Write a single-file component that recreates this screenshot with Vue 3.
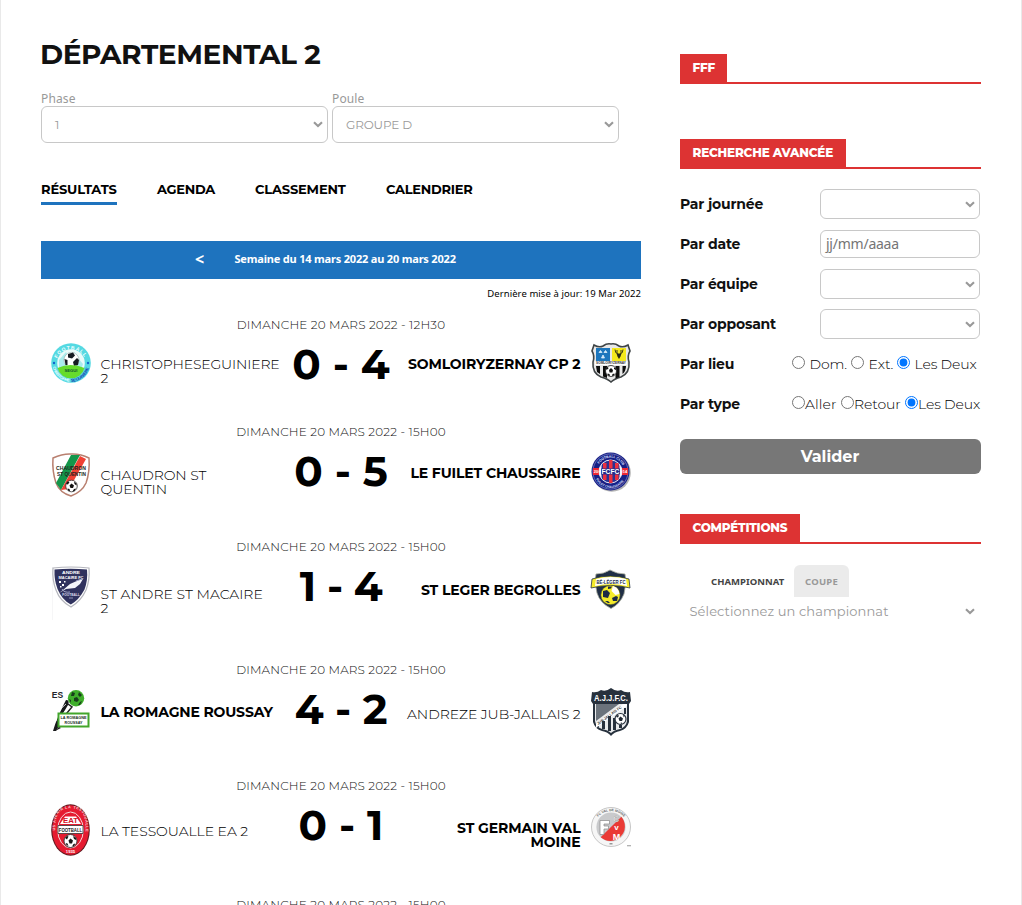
<script setup>
const tabs = [
  { label: 'RÉSULTATS', ls: -0.15, width: 76, active: true },
  { label: 'AGENDA', ls: -0.3, width: 58 },
  { label: 'CLASSEMENT', ls: -0.16, width: 91 },
  { label: 'CALENDRIER', ls: -0.25, width: 87 }
]

const matches = [
  {
    date: 'DIMANCHE 20 MARS 2022 - 12H30', height: 107, score: '0 - 4', sls: 0,
    home: { lines: ['CHRISTOPHESEGUINIERE', '2'], ls: -0.16, nameY: 32, logo: 'christophe', logoY: 11, logoH: 40 },
    away: { lines: ['SOMLOIRYZERNAY CP 2'], ls: -0.12, nameY: 32, win: true, logo: 'somloir', logoY: 11, logoH: 40 }
  },
  {
    date: 'DIMANCHE 20 MARS 2022 - 15H00', height: 115, score: '0 - 5', sls: 0,
    home: { lines: ['CHAUDRON ST', 'QUENTIN'], ls: -0.08, nameY: 36, logo: 'chaudron', logoY: 14, logoH: 44 },
    away: { lines: ['LE FUILET CHAUSSAIRE'], ls: -0.13, nameY: 34, win: true, logo: 'fuilet', logoY: 13, logoH: 40 }
  },
  {
    date: 'DIMANCHE 20 MARS 2022 - 15H00', height: 123, score: '1 - 4', sls: -0.6,
    home: { lines: ['ST ANDRE ST MACAIRE', '2'], ls: 0.03, nameY: 40, logo: 'andre', logoY: 12, logoH: 54 },
    away: { lines: ['ST LEGER BEGROLLES'], ls: -0.13, nameY: 36, win: true, logo: 'leger', logoY: 16, logoH: 39 }
  },
  {
    date: 'DIMANCHE 20 MARS 2022 - 15H00', height: 116, score: '4 - 2', sls: -0.2,
    home: { lines: ['LA ROMAGNE ROUSSAY'], ls: -0.16, nameY: 35, win: true, logo: 'romagne', logoY: 13, logoH: 41 },
    away: { lines: ['ANDREZE JUB-JALLAIS 2'], ls: -0.06, nameY: 37, logo: 'andreze', logoY: 11, logoH: 49 }
  },
  {
    date: 'DIMANCHE 20 MARS 2022 - 15H00', height: 119, score: '0 - 1', sls: 0,
    home: { lines: ['LA TESSOUALLE EA 2'], ls: -0.05, nameY: 38, logo: 'tessoualle', logoY: 11, logoH: 52 },
    away: { lines: ['ST GERMAIN VAL', 'MOINE'], ls: -0.1, nameY: 35, win: true, logo: 'germain', logoY: 14, logoH: 40 }
  },
  { date: 'DIMANCHE 20 MARS 2022 - 15H00', height: 100 }
]

const sides = ['home', 'away']

const fields = [
  { label: 'Par journée', kind: 'select' },
  { label: 'Par date', kind: 'date' },
  { label: 'Par équipe', kind: 'select' },
  { label: 'Par opposant', kind: 'select' },
  {
    label: 'Par lieu', kind: 'radio', name: 'lieu',
    options: [
      { text: 'Dom.', width: 59, ls: -0.1 },
      { text: 'Ext.', width: 46, ls: 0 },
      { text: 'Les Deux', width: 83, ls: -0.15, on: true }
    ]
  },
  {
    label: 'Par type', kind: 'radio', name: 'type', tight: true,
    options: [
      { text: 'Aller', width: 49, ls: 0.1 },
      { text: 'Retour', width: 64, ls: -0.1 },
      { text: 'Les Deux', width: 76, ls: -0.15, on: true }
    ]
  }
]
</script>

<template>
  <div class="page">
    <aside class="share"><span class="fb"></span><span class="tw"></span></aside>

    <main class="main">
      <h1>DÉPARTEMENTAL 2</h1>
      <div class="filters">
        <div class="filter">
          <label>Phase</label>
          <div class="select big">1
            <svg class="chev" viewBox="0 0 10 7"><path d="M1 1.2 5 5 9 1.2" /></svg>
          </div>
        </div>
        <div class="filter">
          <label>Poule</label>
          <div class="select big">GROUPE D
            <svg class="chev" viewBox="0 0 10 7"><path d="M1 1.2 5 5 9 1.2" /></svg>
          </div>
        </div>
      </div>

      <nav class="tabs">
        <a v-for="t in tabs" :key="t.label" :class="{ active: t.active }" :style="{ letterSpacing: t.ls + 'px', width: t.width + 'px' }">{{ t.label }}</a>
      </nav>

      <div class="week"><span class="prev">&lt;</span><span>Semaine du 14 mars 2022 au 20 mars 2022</span></div>
      <p class="updated">Dernière mise à jour: 19 Mar 2022</p>

      <section v-for="(m, i) in matches" :key="i" class="match" :style="{ height: m.height + 'px' }">
        <p class="date">{{ m.date }}</p>
        <div v-if="m.score" class="row">
          <div class="score" :style="{ letterSpacing: m.sls + 'px' }">{{ m.score }}</div>
          <div
            v-for="s in sides" :key="s" class="team" :class="[s, { win: m[s].win }]">
            <div class="name" :style="{ paddingTop: m[s].nameY - 7 + 'px', letterSpacing: m[s].ls + 'px' }">
              <span v-for="l in m[s].lines" :key="l">{{ l }}</span>
            </div>
            <svg class="logo" :style="{ marginTop: m[s].logoY + 'px', height: m[s].logoH + 'px' }" :viewBox="`0 0 40 ${m[s].logoH}`">
              <g v-if="m[s].logo === 'christophe'">
                <circle cx="20" cy="20" r="19.8" fill="#55d9e2" />
                <circle cx="20" cy="20" r="13.800" fill="#e9fbfa" />
                <path d="M8 17 15 9l4 8 4-8 4 6 5 6-2 6H8z" fill="#7fe3e4" opacity=".6" />
                <circle cx="20.5" cy="17" r="7.6" fill="#fff" stroke="#9aa" stroke-width=".6" />
                <path d="M17 11l5-1.500 2 3-3 3-4-1zM13.500 16l3 1v5l-2 0zM22 19l4-4 2 2-1 5-4 1z" fill="#151b22" />
                <path d="M6.500 25q13-6 27 0a14 14 0 0 1-27 0z" fill="#66dc2c" />
                <text x="20" y="28.500" class="tiny" font-size="4.200" fill="#0c5130">SEGUI</text>
                <path id="cTop" d="M5.500 17a15.200 15.200 0 0 1 29 0" fill="none" />
                <text class="tinyStart" font-size="5" letter-spacing=".9" fill="#f4ffff"><textPath href="#cTop" startOffset="4%">FOOTBALL</textPath></text>
                <path id="cBot" d="M1.800 24a18.600 18.600 0 0 0 36.400 0" fill="none" />
                <text class="tinyStart" font-size="4" letter-spacing="-.3" fill="#eaffff"><textPath href="#cBot">CHRISTOPHE</textPath></text>
                <text class="tinyStart" font-size="4.200" letter-spacing="-.2" fill="#123bb0"><textPath href="#cBot" startOffset="50%">SEGUINIERE</textPath></text>
                <circle cx="3" cy="20" r="1.200" fill="#1266cc" /><circle cx="37" cy="20" r="1.200" fill="#1266cc" />
              </g>
              <g v-else-if="m[s].logo === 'somloir'">
                <path d="M3 2q5 3 9 1 4-3 8-2 4-1 8 2 4 2 9-1l2 6q-3 5-1 11 1 11-8 15-7 2-10 5-3-3-10-5-9-4-8-15 2-6-1-11z" fill="#e8e8e8" stroke="#3f4446" stroke-width="1.600" />
                <path d="M5 5h14v13H5z" fill="#1c76bd" />
                <path d="M21 5h14v13H21z" fill="#f5e91c" />
                <path d="M8 9.500l1.500-2L11 9.500zM13 9.500l1.500-2L16 9.500zM10.500 15l1.500-3 1.500 3z" fill="#d9ecfa" stroke="#d9ecfa" stroke-width=".8" />
                <path d="M24 6.500q0 4 3 4.500M32 6.500q0 4-3 4.500M26 7v3M30 7v3" fill="none" stroke="#292916" stroke-width=".9" />
                <path d="M25.500 10.500h5l-1 3-1.500 2.500-1.500-2.500z" fill="#292916" />
                <path d="M4 18h32v4H4z" fill="#fff" />
                <text x="20" y="21.300" class="tiny" font-size="3.500" fill="#333" textLength="30" lengthAdjust="spacingAndGlyphs">SOMLOIRYZERNAY</text>
                <path d="M5 23h4v8l-3-2zM12 23h4v12l-4-1.500zM24.500 23h4v11l-4 1.500zM31.500 23H35q0 5-3.500 8z" fill="#0d0d0d" />
                <circle cx="20" cy="28" r="5.500" fill="#fff" stroke="#222" stroke-width=".8" />
                <path d="M18 27l2-2 2 2-.6 2.500h-2.800zM15 25l2-1 .5 1.500-2 1.500zM23 24.500l2 1v1.500l-2-1zM16.500 30.500l2 .5.500 2-2-.5zM21.500 31l2-.5-.5 2-2 .5z" fill="#111" />
              </g>
              <g v-else-if="m[s].logo === 'chaudron'">
                <path d="M2 5Q12 .5 20 1q9-.5 18 4 1 14-3 25-4 9-15 13Q9 40 5 30 1 18 2 5z" fill="#fff" stroke="#b98070" stroke-width="1.500" />
                <path d="M20 2h9L10 37l-5-7z" fill="#14964a" />
                <path d="M29 3l6 3L18 36l-8 1z" fill="#f04134" />
                <text x="20" y="16.500" class="tiny" font-size="5.400" fill="#241f20" textLength="30" lengthAdjust="spacingAndGlyphs">CHAUDRON</text>
                <text x="20.500" y="22.800" class="tiny" font-size="5.400" fill="#241f20" textLength="29" lengthAdjust="spacingAndGlyphs">ST QUENTIN</text>
                <circle cx="20.500" cy="33" r="5.800" fill="#fff" stroke="#333" stroke-width=".8" />
                <path d="M18.500 32.500l2-2 2.500 2-1 2.500h-2.500zM15 31l1.500-2.500 2 .5-1.500 2.500zM23 28.500l2.500 2v2l-2-1.500zM16.500 35.500l2 .5.500 2h-1.500zM23 36l2-.5-1.500 2.500-2 .5z" fill="#111" />
              </g>
              <g v-else-if="m[s].logo === 'fuilet'">
                <circle cx="20.800" cy="20.800" r="19" fill="#777" opacity=".55" />
                <circle cx="19.500" cy="19.500" r="19" fill="#171f86" />
                <circle cx="19.500" cy="19.500" r="17.600" fill="none" stroke="#aeb4e1" stroke-width=".5" />
                <path d="M2 16h35v7H2z" fill="#ed2734" />
                <circle cx="19.500" cy="19.500" r="11.500" fill="#2a3193" stroke="#fff" stroke-width=".9" />
                <path d="M12 11h3.500v17H12zM18 8h3.500v23H18zM24 11h3.500v17H24z" fill="#eb3040" />
                <path d="M10.500 12.500q-5 7 0 14zM28.500 12.500q5 7 0 14z" fill="#f6f6ff" />
                <path d="M10 16.500h19v6H10z" fill="#242b8c" />
                <text x="19.500" y="22" class="tiny" font-size="6.500" fill="#fff" textLength="18" lengthAdjust="spacingAndGlyphs">FCFC</text>
                <text x="5" y="21.300" class="tiny" font-size="4" fill="#fff">20</text>
                <text x="34" y="21.300" class="tiny" font-size="4" fill="#fff">14</text>
                <path id="fTop" d="M6.500 15a13.700 13.700 0 0 1 26 0" fill="none" />
                <text class="tinyStart" font-size="3.400" fill="#dfe2ff"><textPath href="#fTop" startOffset="10%">FOOTBALL CLUB</textPath></text>
                <path id="fBot" d="M4.500 26a16.300 16.300 0 0 0 30 0" fill="none" />
                <text class="tinyStart" font-size="3.200" fill="#dfe2ff"><textPath href="#fBot" startOffset="3%">FUILET CHAUSSAIRE</textPath></text>
              </g>
              <g v-else-if="m[s].logo === 'andre'">
                <path d="M1 1h1v53H1z" fill="#f6f6f7" />
                <path d="M2 2q18-2 36 0 1 12-3 22Q30 35 20 41 9 35 5 24 1 14 2 2z" fill="#fff" stroke="#b5b6bd" stroke-width="1.200" />
                <path d="M3.500 3.500q16-1.500 32.500 0 1 11-2.500 20Q28 34 19.800 38.500 11 34 6.500 23 3 14 3.500 3.500z" fill="#30325e" />
                <text x="20" y="8" class="tiny" font-size="4" fill="#fff" textLength="18" lengthAdjust="spacingAndGlyphs">ANDRE</text>
                <text x="20" y="12.600" class="tiny" font-size="4" fill="#fff" textLength="25" lengthAdjust="spacingAndGlyphs">MACAIRE FC</text>
                <path d="M12 24l7-6 9-4 4-1-3 5-5 4-9 1-7 4z" fill="#f3f4fa" />
                <path d="M11 23q2 4 8 3M25 15l6-2" stroke="#9da1c5" fill="none" />
                <path d="M8 15h2v2H8zM11 18h2v2h-2zM9 20h1.500v1.500H9zM13 15h1.500v1.500H13z" fill="#fff" />
                <text x="20" y="29.500" class="tiny" font-size="3.200" fill="#dcdded">FOOTBALL</text>
                <path d="M18 32h4" stroke="#8f92b5" />
              </g>
              <g v-else-if="m[s].logo === 'leger'">
                <path d="M5 4q8 0 14-4 7 4 15 4l1 8-2 12q-4 10-13 14.500Q9 33 6 23L4 12z" fill="#202f46" stroke="#a6a99b" stroke-width=".8" />
                <path d="M1 9q18-6 37 0l1 9q-19-5-39 0z" fill="#f5ec2a" stroke="#26344a" stroke-width=".8" />
                <path d="M5 9q15-4 30 0l1 7q-16-4-32 0z" fill="#fff" />
                <text x="20" y="13.600" class="tiny" font-size="5.800" fill="#1c2e4c" textLength="29" lengthAdjust="spacingAndGlyphs">BÉ-LÉGER FC</text>
                <circle cx="19.500" cy="25" r="9.600" fill="#f5ec2a" stroke="#6a6d2a" stroke-width=".5" />
                <path d="M22 16q6 2 6.500 8l-4 1-4-4z" fill="#fff" />
                <path d="M12 21l4-1 3 3-2 5-5-1zM21 28l4-2 2 1-1 4-4 0zM17 16.500l4 0-1 2-3 .5zM14 31l3 0 2 2-2 0z" fill="#1d2b45" />
              </g>
              <g v-else-if="m[s].logo === 'romagne'">
                <text x="6.500" y="7.500" class="tiny" font-size="8.500" fill="#24262b">ES</text>
                <path d="M15 10q4 0 2 5l-6 10-1 8-5 8H2q4-14 13-31z" fill="#17191b" />
                <path d="M17 14l4 3-10 12" stroke="#222" stroke-width="1.500" fill="none" />
                <path d="M5 31q2-11 10-17M9 31q3-9 8-13" stroke="#fff" fill="none" stroke-width=".8" />
                <circle cx="25" cy="8.200" r="8.200" fill="#3fae2b" />
                <path d="M21 2l3 1-1 3-3 0zM28 2l3 3-2 2-2-2zM23 8l3-1 2 3-2 2-3-1zM18 9l2 1v3zM29 12l2-1-2 4-2 0z" fill="#173d1b" />
                <path d="M7.500 23.500h30v13h-30z" fill="#fff" stroke="#43a62c" stroke-width="2" />
                <text x="22.500" y="29.300" class="tiny" font-size="3.800" fill="#16311a" textLength="26" lengthAdjust="spacingAndGlyphs">LA ROMAGNE</text>
                <text x="22.500" y="34" class="tiny" font-size="3.800" fill="#16311a" textLength="18" lengthAdjust="spacingAndGlyphs">ROUSSAY</text>
                <path d="M8 37l-4 4 6-3z" fill="#222" />
              </g>
              <g v-else-if="m[s].logo === 'andreze'">
                <path d="M1 4q5 1 9-2 5 2 10-2 5 4 10 2 4 3 9 2l1 9-2 3v18q-2 7-9 9-6 1-9 5-3-4-9-5-7-2-9-9V16l-2-3z" fill="#27313d" />
                <path d="M4 16h32v17q-1 6-7 8-6 1-9 4-3-3-9-4-6-2-7-8z" fill="#e9ebed" />
                <text x="20" y="12.500" class="tiny" font-size="9" fill="#fff" textLength="34" lengthAdjust="spacingAndGlyphs">A.J.J.F.C.</text>
                <path d="M5 16h23L5 33z" fill="#6b737c" />
                <path d="M32 16L5 36v4l31-22v-2z" fill="#fff" />
                <path d="M5 38h3v1L6 38zM11 33h3v8h-3zM17 28h3v15h-3zM22 30h3v12h-3zM33 20h2v6h-2zM28 37h3v3h-3z" fill="#27313d" />
                <text x="19" y="28.500" class="tiny" font-size="3.600" fill="#333" transform="rotate(-36 19 28.500)">JUB-JALLAIS FC</text>
                <circle cx="29.500" cy="31" r="5.500" fill="#fff" stroke="#27313d" stroke-width="1.200" />
                <path d="M27.500 30.500l2-2 2.500 2-1 2.500H28.500zM25 29l1.500-2 1.500.5-1 2zM31.500 26.500l2 1.500-.5 1.500zM29 35l2-.5v1.500z" fill="#1d2630" />
              </g>
              <g v-else-if="m[s].logo === 'tessoualle'">
                <ellipse cx="19.500" cy="26" rx="19.300" ry="25.800" fill="#5f1a20" />
                <ellipse cx="19.500" cy="26" rx="18.200" ry="24.700" fill="#e51b30" />
                <ellipse cx="19.500" cy="26" rx="12.800" ry="18" fill="#e51b30" stroke="#f4d8da" stroke-width="1" />
                <path id="tRing" d="M5 33Q1 3 19.500 4.500 38 3 34 33" fill="none" />
                <text class="tinyStart" font-size="3.800" letter-spacing=".5" fill="#fbd5d8"><textPath href="#tRing" startOffset="8%">US AVENIR LA TESSOUALLE</textPath></text>
                <path d="M9 20l5-7.500h11l5 7.500z" fill="#fff" />
                <text x="19.500" y="18.800" class="tiny" font-size="6.400" fill="#d31328" textLength="15" lengthAdjust="spacingAndGlyphs">EAT</text>
                <path d="M7 21.500h25v8H7z" fill="#fff" stroke="#333" stroke-width=".8" />
                <text x="19.500" y="27.700" class="tiny" font-size="6" fill="#222" textLength="23.500" lengthAdjust="spacingAndGlyphs">FOOTBALL</text>
                <circle cx="19.500" cy="37" r="6.500" fill="#fff" stroke="#333" stroke-width=".9" />
                <path d="M17.500 36.500l2-2 2.500 2-1 3h-2.500zM14 34l2-2 1.500.5-1.500 3zM22 32l3 2v2l-2-1zM14.500 39l2 .5 1 2.500-2-1zM22.500 40l2-.5-1.500 2.500-2 .5z" fill="#181818" />
                <text x="19.500" y="49.300" class="tiny" font-size="4.200" fill="#fff">1935</text>
              </g>
              <g v-else>
                <circle cx="20" cy="20" r="19.500" fill="#f6f6f6" stroke="#b9b9b9" stroke-width=".8" />
                <circle cx="20" cy="20" r="14.600" fill="#c9cacc" />
                <path d="M9.700 30.300 30.300 9.700A14.600 14.600 0 0 1 9.700 30.300z" fill="#ea3a35" />
                <path d="M9 13.500h9.500v3.500H13v2h4.500v3H13v5.500H9z" fill="#fff" stroke="#888" stroke-width=".7" />
                <text x="25" y="14.500" class="tiny" font-size="8.500" fill="#fff" stroke="#999" stroke-width=".4">C</text>
                <text x="25.500" y="23" class="tiny" font-size="8" fill="#fff">v</text>
                <text x="25.500" y="32.500" class="tiny" font-size="9" fill="#fff">M</text>
                <path id="gTop" d="M5.500 12a17.300 17.300 0 0 1 29 0" fill="none" />
                <text class="tinyStart" font-size="3.300" fill="#666"><textPath href="#gTop" startOffset="8%">FC VAL DE MOINE</textPath></text>
                <path d="M18.500 36h3v1.500h-3zM36 38.300h4v1h-4z" fill="#999" />
              </g>
            </svg>
          </div>
        </div>
      </section>
    </main>

    <aside class="side">
      <h2 class="h-fff"><span>FFF</span></h2>
      <h2 class="h-search"><span>RECHERCHE AVANCÉE</span></h2>
      <form class="search">
        <div v-for="f in fields" :key="f.label" class="field">
          <b>{{ f.label }}</b>
          <div v-if="f.kind === 'select'" class="select small">
            <svg class="chev" viewBox="0 0 10 7"><path d="M1 1.2 5 5 9 1.2" /></svg>
          </div>
          <div v-else-if="f.kind === 'date'" class="select small dateinput">jj/mm/aaaa</div>
          <div v-else class="options" :class="{ tight: f.tight }">
            <label v-for="o in f.options" :key="o.text" :style="{ width: o.width + 'px', letterSpacing: o.ls + 'px' }">
              <input type="radio" :name="f.name" :checked="o.on"><span>{{ o.text }}</span>
            </label>
          </div>
        </div>
        <div class="submit">Valider</div>
      </form>
      <h2 class="h-comp"><span>COMPÉTITIONS</span></h2>
      <div class="ctabs"><span class="on">CHAMPIONNAT</span><span class="off">COUPE</span></div>
      <div class="select plain">Sélectionnez un championnat
        <svg class="chev" viewBox="0 0 10 7"><path d="M1 1.2 5 5 9 1.2" /></svg>
      </div>
    </aside>
  </div>
</template>

<style>
body { margin: 0; background: #fff; overflow: hidden; }
</style>

<style scoped>
* { box-sizing: border-box; }
.page {
  position: relative; display: flex; width: 1022px; height: 905px; overflow: hidden;
  padding-left: 40px; border-left: 1px solid #e9e9e9; border-right: 1px solid #e9e9e9;
  font-family: Montserrat, Inter, sans-serif; color: #111;
}
.share { position: absolute; left: -1px; top: 363px; width: 1px; display: flex; flex-direction: column; }
.share span { height: 39px; }
.fb { background: #3b5998; }
.tw { background: #1fb0ea; }
h1, h2, p { margin: 0; }

.main { width: 600px; }
h1 { margin-top: 38px; height: 53px; margin-left: -1px; font-size: 28px; line-height: 33px; font-weight: 700; letter-spacing: -.4px; white-space: nowrap; }
.filters { display: flex; gap: 4px; }
.filter { width: 287px; }
.filter label { display: block; height: 15px; font: 12px/15px "Noto Sans", sans-serif; letter-spacing: .12px; color: #999; }
.select { display: flex; align-items: center; justify-content: space-between; border: 1px solid #c8c8c8; border-radius: 6px; color: #999; }
.select.big { height: 37px; padding: 0 4px 0 13px; font-size: 12px; font-weight: 400; letter-spacing: -.15px; }
.chev { width: 10px; height: 7px; flex: none; fill: none; stroke: #999; stroke-width: 2.1; }

.tabs { display: flex; gap: 40px; margin-top: 38px; height: 24px; }
.tabs a { font-size: 13px; font-weight: 700; line-height: 17px; color: #000; white-space: nowrap; }
.tabs a.active { border-bottom: 3px solid #1e73be; }

.week { display: flex; margin-top: 36px; height: 38px; background: #1e73be; color: #fff; font: 700 11px/36px "Noto Sans", sans-serif; letter-spacing: -.19px; }
.week .prev { width: 39.500px; margin-left: 154px; font-size: 16px; }
.updated { margin-top: 8px; height: 30px; text-align: right; font: 9.500px/14px "Noto Sans", sans-serif; letter-spacing: .07px; color: #000; }

.date { height: 15px; font-size: 12px; line-height: 15px; font-weight: 300; letter-spacing: .18px; text-align: center; color: #111; }
.row { display: grid; grid-template-columns: 229px 122px 229px; padding: 0 10px; }
.score { grid-column: 2; grid-row: 1; padding-top: 7px; font-size: 42px; line-height: 50px; font-weight: 700; text-align: center; color: #000; white-space: nowrap; }
.team { display: flex; gap: 10px; grid-row: 1; }
.home { grid-column: 1; flex-direction: row-reverse; justify-content: flex-end; gap: 9.500px; }
.away { grid-column: 3; justify-content: flex-end; gap: 10.500px; text-align: right; }
.name { display: flex; flex-direction: column; font-size: 14px; line-height: 14px; font-weight: 300; white-space: nowrap; color: #000; }
.win .name { font-weight: 700; }
.logo { width: 40px; flex: none; overflow: visible; }
.tiny { font-family: "Liberation Sans", sans-serif; font-weight: 700; text-anchor: middle; }
.tinyStart { font-family: "Liberation Sans", sans-serif; font-weight: 700; }

.side { width: 301px; margin-left: 39px; }
h2 { display: flex; height: 30px; border-bottom: 2px solid #dd3333; font-size: 12px; font-weight: 800; line-height: 28px; }
h2 span { padding-left: 12.500px; background: #dd3333; color: #fff; white-space: nowrap; }
.h-fff { margin-top: 54px; letter-spacing: -.2px; }
.h-fff span { width: 47px; }
.h-search { margin-top: 55px; letter-spacing: -.2px; }
.h-search span { width: 166px; }
.h-comp { margin-top: 40px; letter-spacing: -.25px; }
.h-comp span { width: 120px; }
.search { padding-top: 15px; }
.field { display: flex; align-items: center; justify-content: space-between; height: 40px; padding-right: 1px; }
.field b { font-size: 14px; font-weight: 700; letter-spacing: -.18px; }
.select.small { width: 160px; height: 30px; padding-right: 4px; justify-content: flex-end; }
.select.dateinput { height: 28px; padding: 0 0 2px 5px; justify-content: flex-start; font: 14px "Noto Sans", sans-serif; letter-spacing: -.24px; color: #757575; }
.options { display: flex; width: 188px; font-size: 14px; font-weight: 300; white-space: nowrap; color: #000; }
.options label { display: flex; flex: none; gap: 4.500px; }
.options.tight label { gap: 0; }
.options input { width: 13px; height: 13px; margin: 1px 0 0; flex: none; }
.submit { margin-top: 15px; height: 35px; border-radius: 6px; background: #777; color: #fff; font-size: 16px; font-weight: 700; line-height: 35px; text-align: center; padding-right: 1px; }
.ctabs { display: flex; margin-top: 21px; height: 32px; padding-left: 31px; font: 700 9.500px/33px "Noto Sans", sans-serif; }
.ctabs .on { width: 83px; color: #444; letter-spacing: .03px; }
.ctabs .off { width: 55px; padding-left: 11px; background: #ebebeb; border-radius: 6px 6px 0 0; color: #999; letter-spacing: .23px; }
.select.plain { height: 28px; padding: 0 6px 0 9.500px; border: 0; font-size: 13px; letter-spacing: .1px; }
</style>
